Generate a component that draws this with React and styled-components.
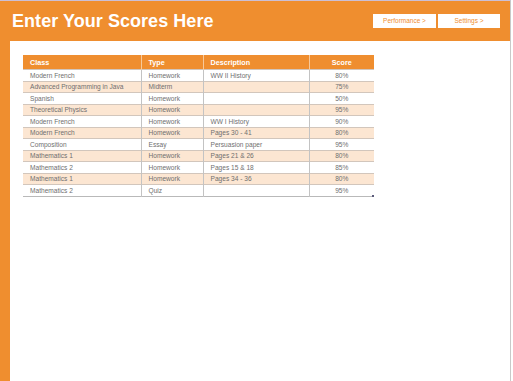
import React from 'react';
import styled, { createGlobalStyle } from 'styled-components';

const GlobalStyle = createGlobalStyle`
  html, body {
    margin: 0;
    padding: 0;
    background: #ffffff;
  }
  body {
    font-family: "Liberation Sans", Arial, sans-serif;
  }
`;

const orange = '#ef8e2f';

const Page = styled.div`
  display: flex;
  flex-direction: column;
  width: 510px;
  height: 380px;
  border-top: 1px solid #cbbfd6;
  border-right: 1px solid #c9c9c9;
  background: ${orange};
`;

const Header = styled.header`
  display: flex;
  align-items: center;
  justify-content: space-between;
  height: 40px;
  padding: 0 10px 0 12px;
  flex: 0 0 auto;
`;

const Title = styled.h1`
  margin: 0;
  font-size: 18px;
  font-weight: bold;
  color: #ffffff;
  letter-spacing: 0.05px;
  margin-top: 1px;
`;

const Nav = styled.nav`
  display: flex;
  gap: 2px;
  margin-top: -1px;
`;

const NavButton = styled.a`
  display: flex;
  align-items: center;
  justify-content: center;
  width: ${({ $w }) => $w}px;
  height: 14px;
  background: #ffffff;
  color: ${orange};
  font-size: 6.5px;
  text-decoration: none;
`;

const Body = styled.div`
  flex: 1 1 auto;
  padding-left: 10px;
  display: flex;
`;

const Panel = styled.main`
  flex: 1 1 auto;
  background: #ffffff;
  padding: 14px 13px;
`;

const TableWrap = styled.div`
  position: relative;
  width: 351px;
`;

const Table = styled.table`
  width: 351px;
  border-collapse: collapse;
  table-layout: fixed;
  font-size: 6.6px;
  color: #6f6f6f;
  border-bottom: 1px solid #b9b9b9;
`;

const HeadCell = styled.th`
  background: ${orange};
  color: #ffffff;
  font-weight: bold;
  font-size: 7.2px;
  height: 14px;
  padding: 0 0 0 ${({ $center }) => ($center ? 0 : 7)}px;
  text-align: ${({ $center }) => ($center ? 'center' : 'left')};
  border-left: 1px solid #f7c99a;
  &:first-child {
    border-left: none;
  }
`;

const Row = styled.tr`
  background: ${({ $alt }) => ($alt ? '#fce6d2' : '#ffffff')};
  border-top: 1px solid #d2c6bc;
`;

const Cell = styled.td`
  height: 10.5px;
  padding: 0 0 0 ${({ $center }) => ($center ? 0 : 7)}px;
  text-align: ${({ $center }) => ($center ? 'center' : 'left')};
  white-space: nowrap;
  overflow: hidden;
  border-left: 1px solid #c3c3c3;
  &:first-child {
    border-left: none;
  }
`;

const Grip = styled.span`
  position: absolute;
  right: 0;
  bottom: 0;
  width: 2px;
  height: 2px;
  background: #5a5a7a;
`;

const rows = [
  ['Modern French', 'Homework', 'WW II History', '80%'],
  ['Advanced Programming in Java', 'Midterm', '', '75%'],
  ['Spanish', 'Homework', '', '50%'],
  ['Theoretical Physics', 'Homework', '', '95%'],
  ['Modern French', 'Homework', 'WW I History', '90%'],
  ['Modern French', 'Homework', 'Pages 30 - 41', '80%'],
  ['Composition', 'Essay', 'Persuasion paper', '95%'],
  ['Mathematics 1', 'Homework', 'Pages 21 & 26', '80%'],
  ['Mathematics 2', 'Homework', 'Pages 15 & 18', '85%'],
  ['Mathematics 1', 'Homework', 'Pages 34 - 36', '80%'],
  ['Mathematics 2', 'Quiz', '', '95%'],
];

export default function App() {
  return (
    <>
      <GlobalStyle />
      <Page>
        <Header>
          <Title>Enter Your Scores Here</Title>
          <Nav>
            <NavButton $w={63}>Performance &gt;</NavButton>
            <NavButton $w={62}>Settings &gt;</NavButton>
          </Nav>
        </Header>
        <Body>
          <Panel>
            <TableWrap>
              <Table>
                <colgroup>
                  <col style={{ width: 118 }} />
                  <col style={{ width: 62 }} />
                  <col style={{ width: 106 }} />
                  <col style={{ width: 65 }} />
                </colgroup>
                <thead>
                  <tr>
                    <HeadCell>Class</HeadCell>
                    <HeadCell>Type</HeadCell>
                    <HeadCell>Description</HeadCell>
                    <HeadCell $center>Score</HeadCell>
                  </tr>
                </thead>
                <tbody>
                  {rows.map((r, i) => (
                    <Row key={i} $alt={i % 2 === 1}>
                      <Cell>{r[0]}</Cell>
                      <Cell>{r[1]}</Cell>
                      <Cell>{r[2]}</Cell>
                      <Cell $center>{r[3]}</Cell>
                    </Row>
                  ))}
                </tbody>
              </Table>
              <Grip />
            </TableWrap>
          </Panel>
        </Body>
      </Page>
    </>
  );
}
